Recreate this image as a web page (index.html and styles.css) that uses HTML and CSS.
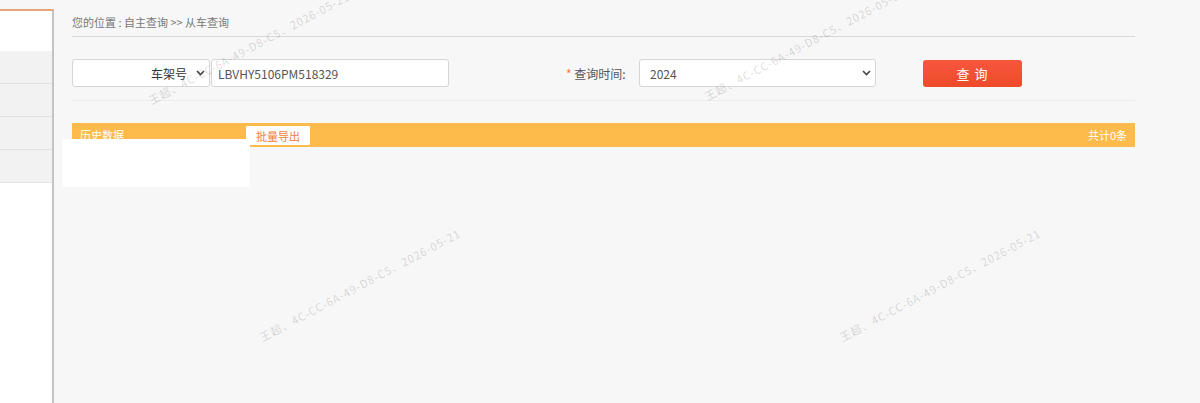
FILE: index.html
```html
<!DOCTYPE html>
<html lang="zh-CN">
<head>
<meta charset="utf-8">
<title>从车查询</title>
<link rel="stylesheet" href="styles.css">
</head>
<body>
<div class="page">
  <aside class="side">
    <div class="side-head"></div>
    <div class="side-item"></div>
    <div class="side-item"></div>
    <div class="side-item"></div>
    <div class="side-item"></div>
  </aside>

  <main class="main">
    <div class="crumb">您的位置 : 自主查询 &gt;&gt; 从车查询</div>

    <div class="form-row">
      <div class="field select type-select">
        <span class="select-text">车架号</span>
        <svg class="chev" width="9" height="6" viewBox="0 0 9 6"><path d="M1 1 L4.5 4.5 L8 1" fill="none" stroke="#444" stroke-width="1.6"/></svg>
      </div>
      <div class="field input vin">LBVHY5106PM518329</div>

      <label class="label"><span class="req">*</span> 查询时间:</label>
      <div class="field select year-select">
        <span class="select-value">2024</span>
        <svg class="chev" width="9" height="6" viewBox="0 0 9 6"><path d="M1 1 L4.5 4.5 L8 1" fill="none" stroke="#444" stroke-width="1.6"/></svg>
      </div>

      <button class="btn-query">查 询</button>
    </div>

    <div class="result-bar">
      <span class="bar-title">历史数据</span>
      <button class="btn-export">批量导出</button>
      <span class="bar-count">共计0条</span>
    </div>
  </main>
</div>

<div class="blank-box"></div>

<div class="wm wm1">王超、4C-CC-6A-49-D8-C5、2026-05-21</div>
<div class="wm wm2">王超、4C-CC-6A-49-D8-C5、2026-05-21</div>
<div class="wm wm3">王超、4C-CC-6A-49-D8-C5、2026-05-21</div>
<div class="wm wm4">王超、4C-CC-6A-49-D8-C5、2026-05-21</div>
</body>
</html>
```

FILE: styles.css
```css
html, body {
  margin: 0;
  padding: 0;
  height: 100%;
}

body {
  background: #f7f7f7;
  font-family: "Noto Sans CJK SC", "Noto Sans", sans-serif;
  font-size: 12px;
  color: #555;
  overflow: hidden;
  position: relative;
}

.page {
  display: flex;
  height: 100%;
}

/* left navigation column */
.side {
  width: 52px;
  margin-top: 9px;
  background: #fff;
  border-top: 2px solid #e6a57a;
  border-right: 2px solid #c4c4c4;
  flex: none;
}

.side-head {
  height: 40px;
}

.side-item {
  height: 32px;
  background: #f2f2f2;
  border-bottom: 1px solid #e2e2e2;
}

/* content column */
.main {
  width: 1063px;
  padding-left: 18px;
}

.crumb {
  padding-top: 14px;
  height: 22px;
  line-height: 17px;
  font-size: 11px;
  color: #777;
  border-bottom: 1px solid #d8d8d8;
}

.form-row {
  display: flex;
  align-items: center;
  margin-top: 22px;
  padding-bottom: 13px;
  border-bottom: 1px solid #ececec;
}

.field {
  box-sizing: border-box;
  height: 28px;
  background: #fff;
  border: 1px solid #d6d6d6;
  border-radius: 3px;
  display: flex;
  align-items: center;
  font-size: 12px;
  color: #555;
}

.select {
  justify-content: flex-end;
  padding-right: 4px;
}

.type-select {
  width: 138px;
  color: #333;
}

.select-text {
  margin-right: 9px;
}

.vin {
  width: 238px;
  margin-left: 1px;
  padding-left: 6px;
  color: #555;
}

.label {
  margin-left: 117px;
  width: 73px;
  color: #555;
}

.req {
  color: #f47a3a;
}

.year-select {
  width: 237px;
  justify-content: space-between;
  padding-left: 10px;
  padding-right: 4px;
}

.chev {
  display: block;
}

.btn-query {
  margin-left: 47px;
  width: 99px;
  height: 27px;
  border: none;
  border-radius: 3px;
  background: linear-gradient(#f8573e, #ee4a2a);
  color: #fff;
  font-family: inherit;
  font-size: 13px;
  letter-spacing: 1px;
  padding: 0;
}

/* result header */
.result-bar {
  margin-top: 22px;
  height: 24px;
  background: #fdbb4c;
  display: flex;
  align-items: center;
  color: #fff;
  font-size: 11px;
  position: relative;
}

.bar-title {
  padding-left: 8px;
  width: 166px;
}

.btn-export {
  height: 19px;
  width: 64px;
  padding: 0;
  border: none;
  border-radius: 1px;
  background: #fff;
  color: #f0803c;
  font-family: inherit;
  font-size: 11px;
  margin-top: 1px;
}

.bar-count {
  margin-left: auto;
  padding-right: 8px;
}

/* blank panel over the list */
.blank-box {
  position: absolute;
  left: 62px;
  top: 139px;
  width: 188px;
  height: 48px;
  background: #fff;
}

/* diagonal watermark text */
.wm {
  position: absolute;
  white-space: nowrap;
  font-size: 11px;
  line-height: 12px;
  letter-spacing: 0.9px;
  color: rgba(0, 0, 0, 0.16);
  transform-origin: 0 100%;
  transform: rotate(-28deg);
  pointer-events: none;
}

.wm1 { left: 152px; top: 94px; }
.wm2 { left: 708px; top: 90px; }
.wm3 { left: 263px; top: 331px; }
.wm4 { left: 843px; top: 331px; }
```
